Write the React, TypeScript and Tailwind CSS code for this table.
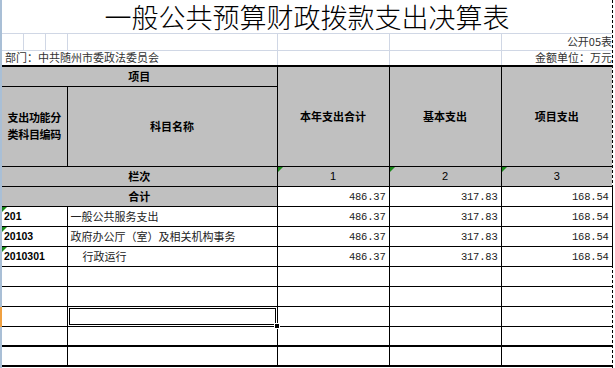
import React from "react";

const cjk = "font-['Noto_Sans_CJK_SC',sans-serif]";
const grid = "border-[#d0d7e5]";

// small green marker in the top-left corner of a cell
const Tri = () => (
  <span className="absolute left-0 top-0 w-0 h-0 border-t-[5px] border-r-[5px] border-t-[#1a8a1a] border-r-transparent" />
);

const rows = [
  { code: "201", name: "一般公共服务支出", indent: false },
  { code: "20103", name: "政府办公厅（室）及相关机构事务", indent: false },
  { code: "2010301", name: "行政运行", indent: true },
];

const Num = ({ v }: { v: string }) => (
  <td className="border border-black text-right align-middle pr-[3px] pt-[2px] font-['Liberation_Mono',monospace] text-[10.5px] tracking-[-0.2px] text-[#222] leading-none">
    {v}
  </td>
);

export default function App() {
  const cell = "border border-black bg-[#c0c0c0] text-[11px] font-bold text-black text-center";
  const head = `${cell} leading-none`;
  return (
    <div className={`w-[615px] h-[368px] overflow-hidden bg-white flex ${cjk}`}>
      {/* row-header edge */}
      <div className="w-[2px] flex flex-col bg-[#a9bfd6] shrink-0">
        <div className="h-[307px]" />
        <div className="h-[20px] bg-[#f0a040]" />
      </div>

      <div className="w-[611px] shrink-0 border-r border-dashed border-black">
        <table className="table-fixed border-collapse w-[610px]">
          <colgroup>
            <col className="w-[21px]" />
            <col className="w-[22px]" />
            <col className="w-[22px]" />
            <col className="w-[210px]" />
            <col className="w-[112px]" />
            <col className="w-[112px]" />
            <col className="w-[111px]" />
          </colgroup>
          <tbody>
            <tr className="h-[33px]">
              <td colSpan={7} className={`border-b ${grid} text-center text-[27px] font-light leading-[31px] text-black`}>
                一般公共预算财政拨款支出决算表
              </td>
            </tr>
            <tr className="h-[17px]">
              <td className={`border ${grid} border-l-0`} />
              <td className={`border ${grid}`} />
              <td className={`border ${grid}`} />
              <td className={`border ${grid}`} />
              <td className={`border ${grid}`} />
              <td className={`border ${grid}`} />
              <td className={`border ${grid} border-r-0 text-right text-[11px] text-[#333] leading-none pr-0`}>
                公开05表
              </td>
            </tr>
            <tr className="h-[16px]">
              <td colSpan={4} className={`border ${grid} border-l-0 text-[11px] text-[#333] leading-none pl-[3px]`}>
                部门：中共随州市委政法委员会
              </td>
              <td className={`border ${grid}`} />
              <td className={`border ${grid}`} />
              <td className={`border ${grid} border-r-0 text-right text-[11px] text-[#333] leading-none`}>
                金额单位：万元
              </td>
            </tr>

            <tr className="h-[20px]">
              <td colSpan={4} className={`${head} border-t-2 border-l-0`}>项目</td>
              <td rowSpan={2} className={`${head} border-t-2`}>本年支出合计</td>
              <td rowSpan={2} className={`${head} border-t-2`}>基本支出</td>
              <td rowSpan={2} className={`${head} border-t-2 border-r-0`}>项目支出</td>
            </tr>
            <tr className="h-[80px]">
              <td colSpan={3} className={`${cell} border-l-0 leading-[17px] tracking-[-0.3px]`}>
                支出功能分
                <br />
                类科目编码
              </td>
              <td className={head}>科目名称</td>
            </tr>
            <tr className="h-[20px]">
              <td colSpan={4} className={`${head} border-l-0`}>栏次</td>
              <td className={`${head} font-normal relative font-['Liberation_Sans',sans-serif]`}>
                <Tri />1
              </td>
              <td className={`${head} font-normal relative font-['Liberation_Sans',sans-serif]`}>
                <Tri />2
              </td>
              <td className={`${head} font-normal relative border-r-0 font-['Liberation_Sans',sans-serif]`}>
                <Tri />3
              </td>
            </tr>
            <tr className="h-[20px]">
              <td colSpan={4} className={`${head} border-l-0`}>合计</td>
              <Num v="486.37" />
              <Num v="317.83" />
              <Num v="168.54" />
            </tr>

            {rows.map((r) => (
              <tr key={r.code} className="h-[20px]">
                <td colSpan={3} className="border border-black border-l-0 relative font-['Liberation_Sans',sans-serif] font-bold text-[10.5px] text-black leading-none pl-[2px]">
                  <Tri />
                  {r.code}
                </td>
                <td className={`border border-black text-[11px] text-[#222] leading-none ${r.indent ? "pl-[15px]" : "pl-[3px]"}`}>
                  {r.name}
                </td>
                <Num v="486.37" />
                <Num v="317.83" />
                <Num v="168.54" />
              </tr>
            ))}

            {[0, 1, 2, 3].map((i) => (
              <tr key={i} className="h-[20px]">
                <td colSpan={3} className="border border-black border-l-0" />
                <td className="border border-black relative">
                  {i === 2 && (
                    <>
                      <div className="absolute -inset-px border border-black shadow-[inset_0_0_0_1px_white,inset_0_0_0_2px_black]" />
                      <div className="absolute -right-[3px] -bottom-[3px] w-[6px] h-[6px] bg-black border border-white" />
                    </>
                  )}
                </td>
                <td className="border border-black" />
                <td className="border border-black" />
                <td className="border border-black border-r-0" />
              </tr>
            ))}
            <tr className="h-[20px]">
              <td colSpan={3} className="border border-black border-y-2 border-l-0" />
              <td className="border border-black border-y-2" />
              <td className="border border-black border-y-2" />
              <td className="border border-black border-y-2" />
              <td className="border border-black border-y-2 border-r-0" />
            </tr>
          </tbody>
        </table>
      </div>
    </div>
  );
}
